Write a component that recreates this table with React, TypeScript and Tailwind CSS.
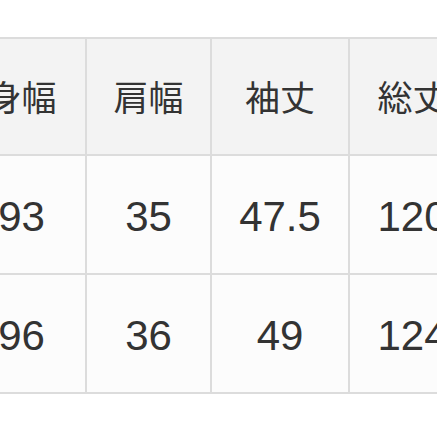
export default function App() {
  const headers = ["身幅", "肩幅", "袖丈", "総丈"];
  const rows = [
    ["93", "35", "47.5", "120"],
    ["96", "36", "49", "124"],
  ];
  const widths = ["w-[129px]", "w-[125px]", "w-[138px]", "w-[127px]"];

  return (
    <div
      className="w-[437px] h-[437px] overflow-hidden bg-white pt-[37px]"
      style={{ fontFamily: '"Liberation Sans", "Noto Sans CJK JP", sans-serif' }}
    >
      <table className="-ml-[44px] w-[521px] min-w-[521px] border-collapse table-fixed text-[#333]">
        <thead>
          <tr>
            {headers.map((h, i) => (
              <th
                key={h}
                className={`${widths[i]} h-[117px] pt-[5px] border-2 border-[#dcdcdc] bg-[#f3f3f3] text-[35px] font-normal text-center`}
              >
                {h}
              </th>
            ))}
          </tr>
        </thead>
        <tbody>
          {rows.map((r) => (
            <tr key={r[0]}>
              {r.map((c, i) => (
                <td
                  key={i}
                  className={`${widths[i]} h-[119px] pt-[3px] border-2 border-[#dcdcdc] bg-[#fcfcfc] text-[42px] text-center`}
                >
                  {c}
                </td>
              ))}
            </tr>
          ))}
        </tbody>
      </table>
    </div>
  );
}
